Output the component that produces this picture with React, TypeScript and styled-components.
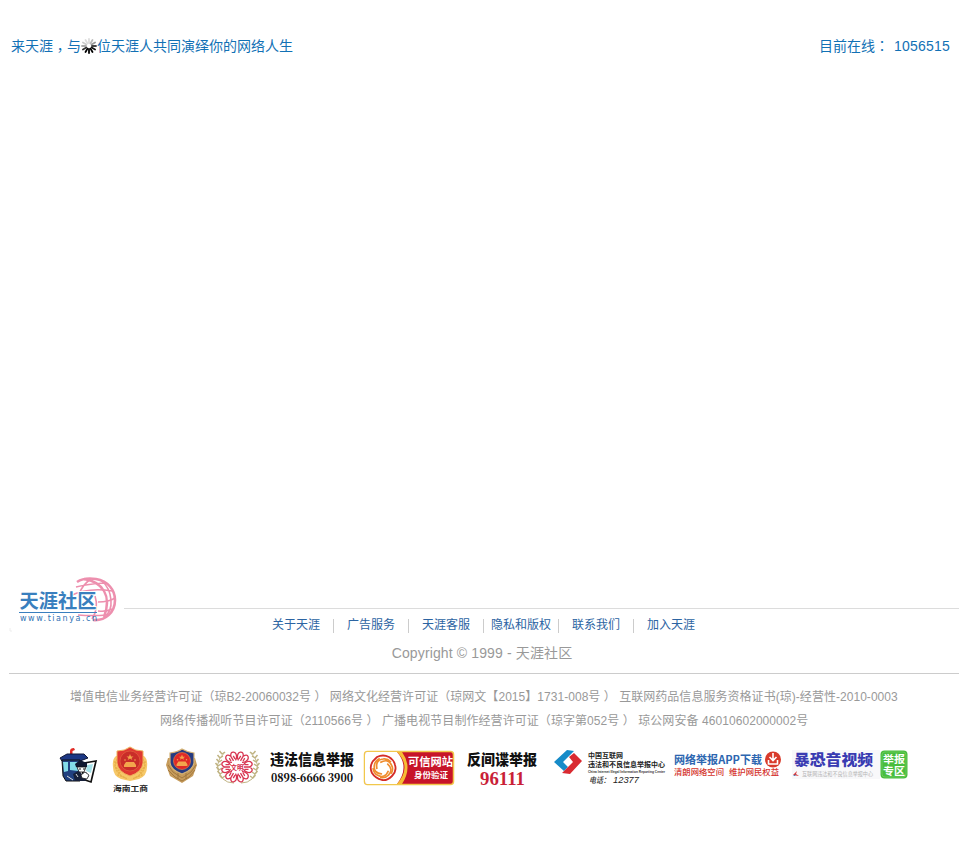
import React from "react";
import styled, { createGlobalStyle } from "styled-components";

const GlobalStyle = createGlobalStyle`
  * { box-sizing: border-box; }
  body { margin: 0; background: #fff; font-family: "Liberation Sans", "Noto Sans CJK SC", sans-serif; }
`;
const Page = styled.div`
  width: 967px; height: 854px; display: flex; flex-direction: column; overflow: hidden;
`;
const TopBar = styled.header`
  display: flex; justify-content: space-between; align-items: center;
  margin-top: 36px; height: 20px; padding: 0 17px 0 11px;
  font-size: 14px; line-height: 20px; color: #1271b5; white-space: nowrap;
`;
const Slogan = styled.div`display: flex; align-items: center;`;
const Online = styled.div`display: flex; gap: 5px;`;
const Count = styled.span`letter-spacing: 0.2px;`;
const CenteredMark = styled.span<{ $drop?: number }>`
  display: inline-block; font-family: "Noto Sans CJK TC", sans-serif; line-height: 1;
  transform: translateY(${p => p.$drop ?? 0}px);
`;
const Footer = styled.footer`margin-top: 514px; display: flex; flex-direction: column;`;
const BrandRow = styled.div`display: flex; height: 39px; padding-right: 8px;`;
const LogoSlot = styled.div`width: 124px; flex: none;`;
const BrandRule = styled.div`flex: 1; border-bottom: 1px solid #dcdcdc;`;
const Links = styled.nav`
  display: flex; height: 32px; padding: 10px 0 0 259px; font-size: 12px; line-height: 13px;
`;
const FooterLink = styled.a`
  width: 75px; height: 14px; text-align: center; color: #2c64a2; white-space: nowrap;
  border-right: 1px solid #ccc;
  &:last-child { border-right: 0; padding-right: 1px; }
`;
const Copyright = styled.div`
  height: 33px; margin: 0 8px 0 9px; padding-right: 4px; border-bottom: 1px solid #ccc;
  text-align: center; font-size: 14px; line-height: 24px; letter-spacing: 0.13px; color: #999;
`;
const Licenses = styled.div`padding-top: 11px;`;
const License = styled.div<{ $left: number; $track: number }>`
  height: 24px; line-height: 24px; padding-left: ${p => p.$left}px; font-size: 12px;
  color: #999; white-space: pre; letter-spacing: ${p => p.$track}px;
`;
const Badges = styled.div`display: flex; height: 60px; margin-top: 7px; padding-left: 50px;`;
const Drawing = styled.svg`display: block; flex: none; overflow: visible;`;

const CJK = '"Noto Sans CJK SC", sans-serif';
type LabelProps = { x: number; y: number; w: number; size: number; fill: string; weight?: number; family?: string; italic?: boolean; outline?: string; spaced?: boolean; children: string };
const Label = ({ x, y, w, size, fill, weight = 400, family = CJK, italic, outline, spaced, children }: LabelProps) => (
  <text x={x} y={y} textLength={w} lengthAdjust={spaced ? "spacing" : "spacingAndGlyphs"} fontSize={size} fontWeight={weight}
    fontFamily={family} fontStyle={italic ? "italic" : "normal"} fill={fill} stroke={outline ?? "none"} strokeWidth={outline ? 2 : 0} paintOrder="stroke">{children}</text>
);

const Spinner = () => (
  <Drawing width="16" height="16" viewBox="0 0 16 16">
    {["#ddd", "#bbb", "#999", "#444", "#111", "#000", "#000", "#000", "#333", "#aaa", "#ccc", "#ddd"].map((shade, i) => (
      <path key={i} d="M8 1V5" stroke={shade} strokeWidth="1.8" strokeLinecap="round" transform={`rotate(${i * 30} 8 8)`} />
    ))}
  </Drawing>
);

const TianyaLogo = () => (
  <Drawing width="124" height="60" viewBox="0 0 124 60">
    <g fill="none" stroke="#ed8fae">
      <path d="M77 12C83 8 90 8 96 9C108 11 115 20 115 30C115 42 106 51 93 50" strokeWidth="2.6" />
      <path d="M84 9Q98 11 104 21T104 47" strokeWidth="2.4" />
      <path d="M76 17Q88 14 104 13M70 26Q88 17 112 21M79 24Q83 14 91 9M95 26Q99 38 92 49M98 32Q109 32 115 28M98 41Q107 42 112 39M78 45Q92 46 107 45M102 11Q110 18 111 30T104 47" strokeWidth="1.6" />
    </g>
    <Label x={19.5} y={38} w={77} size={19} weight={700} fill="#397fbe" outline="#fff">天涯社区</Label>
    <path d="M19 42.5H97" stroke="#397fbe" />
    <Label x={20} y={50.5} w={77} size={8} family='"DejaVu Sans", sans-serif' spaced fill="#2f72b4">www.tianya.cn</Label>
    <path d="M10 58V61H12" fill="none" stroke="#eee" />
  </Drawing>
);

const PoliceBox = () => (
  <Drawing width="55" height="60" viewBox="0 0 55 60">
    <path d="M20 14V11Q20 8 24 8L25 10L22.5 11V14Z" fill="#e12b25" />
    <path d="M10 18L17 14L34 14L38 18L30 21L12 21Z" fill="#1c3784" stroke="#101735" />
    <path d="M12 20L30 20V41L16 41L13 36Z" fill="#214080" stroke="#111" />
    <path d="M13 22H18V31L14 32ZM20 22H28V31L20 30Z" fill="#83dce8" />
    <path d="M34 23L46 21L41 42L32 39Z" fill="#fff" stroke="#111" strokeWidth="1.7" />
    <path d="M37 25L43 24L41 33L36 31Z" fill="#a5e2e9" />
    <path d="M25 24L30 20L37 23L37 27L26 27Z" fill="#101830" />
    <path d="M27 27H36L34 32H29Z" fill="#fff" stroke="#111" strokeWidth=".8" />
    <path d="M29 29H31M33 29H35" stroke="#111" />
    <path d="M23 34L28 31L32 34L36 32L39 36L35 41L25 41Z" fill="#17203a" />
    <path d="M31 35L35 32L39 35L37 39L32 38Z" fill="#fff" stroke="#111" strokeWidth=".7" />
    <path d="M17 36L23 40M26 34L28 37" stroke="#ddd" />
  </Drawing>
);

const Gate = ({ y }: { y: number }) => (
  <g transform={`translate(0 ${y})`} fill="#f3a64c">
    <path d="M-6 3H6V5H-6ZM-4 0H4L6 3H-6ZM0-8L1-5.5H3.5L1.5-4L2.3-2L0-3.5L-2.3-2L-1.5-4L-3.5-5.5H-1Z" />
    <circle cx="-5" cy="-2" r=".8" /><circle cx="5" cy="-2" r=".8" />
  </g>
);

const CommerceEmblem = () => (
  <Drawing width="50" height="60" viewBox="0 0 50 60">
    <path d="M11 16Q7 19 8 27Q8 36 16 39L25 41L34 39Q42 36 42 27Q43 19 39 16Z" fill="#f6c868" />
    <path d="M10 21Q9 34 23 39M40 21Q41 34 27 39M12 19L10 26L15 32L13 35L21 38M38 19L40 26L35 32L37 35L29 38" fill="none" stroke="#e7af48" strokeWidth="1.3" strokeDasharray="2 1" />
    <path d="M12 11Q20 11 25 7Q30 11 38 11V23Q37 32 25 36Q13 32 12 23Z" fill="#df3831" stroke="#efb05b" strokeWidth="1" />
    <circle cx="25" cy="21" r="10" fill="#c92d29" stroke="#e36c43" strokeWidth=".6" />
    <g transform="translate(25 0)"><Gate y={22} /></g>
    <Label x={8} y={51} w={35} size={7} weight={700} fill="#222">海南工商</Label>
  </Drawing>
);
const PoliceEmblem = () => (
  <Drawing width="55" height="60" viewBox="0 0 55 60">
    <path d="M13 18L11 25L15 36L27 43L38 36L42 25L40 18Z" fill="#c69b5b" />
    <path d="M13 25L18 32L27 38L36 32L41 25M13 30L20 37L27 41L34 37L40 30M23 33V39M31 33V39" fill="none" stroke="#987039" strokeWidth=".8" />
    <path d="M15 13Q23 12 27 9Q32 12 39 13V23Q38 30 27 34Q16 30 15 23Z" fill="#263b81" stroke="#d6b477" strokeWidth="1.2" />
    <circle cx="27" cy="21" r="8.5" fill="#df2927" stroke="#ed8d47" strokeWidth=".6" />
    <g transform="translate(27 0) scale(.9)"><Gate y={24} /></g>
  </Drawing>
);
const CivilizedBadge = () => (
  <Drawing width="52" height="60" viewBox="55 0 52 60">
    <g fill="none" stroke="#c0b484" strokeWidth="1">
      <path d="M70 12Q56 25 68 39Q72 43 79 43M95 12Q109 25 97 39Q93 43 86 43" />
      {[14, 18, 22, 26, 30, 34, 38].map((y, i) => {
        const bend = [1, 3, 4, 5, 4, 3, 1][i];
        return <path key={y} d={`M${68 - bend} ${y}l-2.5-3m2.5 3l3-2M${97 + bend} ${y}l2.5-3m-2.5 3l-3-2`} strokeWidth="1.5" />;
      })}
    </g>
    <g fill="none" stroke="#d83551" strokeWidth="1.3">
      {[0, 60, 120, 180, 240, 300].map(a => <path key={a} transform={`rotate(${a + 30} 82 27)`} d="M82 20V14.5Q80 10.5 77.5 12.5Q75 15 78 19L80 20.5M82 14.5Q84 10.5 86.5 12.5Q89 15 86 19L84 20.5M79.7 19V15.5M84.3 19V15.5" />)}
    </g>
    <Label x={75.5} y={29.7} w={13} size={7} weight={700} fill="#d62947">文明</Label>
  </Drawing>
);
const HotlineBadge = () => (
  <Drawing width="96" height="60" viewBox="0 0 96 60">
    <Label x={8} y={25} w={84} size={14.5} weight={900} fill="#111">违法信息举报</Label>
    <Label x={9} y={42} w={82} size={12.5} weight={900} family='"Noto Serif CJK SC", "Liberation Serif", serif' fill="#111">0898-6666 3900</Label>
  </Drawing>
);
const TrustedBadge = () => (
  <Drawing width="97" height="60" viewBox="0 0 97 60">
    <rect x="6.5" y="11.5" width="89" height="33" rx="3" fill="#c71429" stroke="#f1c84c" strokeWidth="1.5" />
    <path d="M9 12H39Q52 27 39 44H9Q7 44 7 41V15Q7 12 9 12Z" fill="#fff" />
    <path d="M39 12Q54 27 39 44H44Q55 27 44 12Z" fill="#f6bd35" />
    <path d="M19 17Q25 14 31 17Q36 20 37 25Q39 31 34 36Q29 41 24 40Q17 38 14 33Q11 27 15 21Z" fill="none" stroke="#d52d28" strokeWidth="1.8" />
    <g fill="none" stroke="#ef8c2e" strokeWidth="1.7">
      {[0, 72, 144, 216, 288].map(a => <path key={a} transform={`rotate(${a} 25 28)`} d="M19 29Q17 20 25 19Q29 18 33 22" />)}
    </g>
    <Label x={50} y={26} w={45} size={11} weight={700} fill="#fff">可信网站</Label>
    <Label x={56} y={37.5} w={34} size={8} weight={700} fill="#fff">身份验证</Label>
  </Drawing>
);
const SpyBadge = () => (
  <Drawing width="95" height="60" viewBox="0 0 95 60">
    <Label x={12} y={25} w={70} size={14.5} weight={900} fill="#111">反间谍举报</Label>
    <Label x={25} y={45} w={45} size={18.5} weight={700} family='"Liberation Serif", serif' fill="#c91f37">96111</Label>
  </Drawing>
);
const InternetCenter = () => (
  <Drawing width="118" height="60" viewBox="0 0 118 60">
    <path d="M4 22L17 10L24 11L13 22L18 27L14 31Z" fill="#168bc8" />
    <path d="M24 13L32 21L20 34L12 33L23 22L19 17Z" fill="#d92a31" />
    <Label x={38} y={18} w={35} size={6.7} weight={700} fill="#222">中国互联网</Label>
    <Label x={38} y={27} w={77} size={7} weight={700} fill="#222">违法和不良信息举报中心</Label>
    <Label x={38} y={32.5} w={77} size={3.5} weight={700} family='"Liberation Sans", sans-serif' fill="#333">China Internet Illegal Information Reporting Center</Label>
    <Label x={39} y={43} w={21} size={8} italic weight={500} fill="#333">电话：</Label>
    <Label x={63} y={43} w={26} size={9} italic family='"Liberation Sans", sans-serif' fill="#222">12377</Label>
  </Drawing>
);
const AppBadge = () => (
  <Drawing width="117" height="60" viewBox="0 0 117 60">
    <Label x={6} y={24} w={88} size={11.5} weight={700} fill="#2d66b0">网络举报APP下载</Label>
    <circle cx="105" cy="19.5" r="8" fill="#d93b2b" />
    <path d="M105 13V20M101.5 17L105 20.5L108.5 17M100.5 20V24H109.5V20" fill="none" stroke="#fff" strokeWidth="1.6" />
    <Label x={6} y={35} w={50} size={7.7} weight={500} fill="#d4332d">清朗网络空间</Label>
    <Label x={61} y={35} w={50} size={7.7} weight={500} fill="#d4332d">维护网民权益</Label>
  </Drawing>
);
const VideoBadge = () => (
  <Drawing width="130" height="60" viewBox="0 0 130 60">
    <rect x="7" y="10" width="88" height="29" fill="#f8f8fa" />
    <Label x={9} y={25} w={79} size={14.5} weight={900} fill="#393bb2">暴恐音视频</Label>
    <path d="M8 35L12 31L11 34L14 36Z" fill="#d33" /><path d="M8 36L11 34L10 36Z" fill="#357cc0" />
    <Label x={17} y={35.5} w={71} size={5.5} fill="#b5b5b5">互联网违法和不良信息举报中心</Label>
    <rect x="95.5" y="10.5" width="27" height="28" rx="4" fill="#48bd3d" />
    <rect x="97" y="12" width="24" height="25" rx="3" fill="none" stroke="#7bd36b" strokeWidth=".6" />
    <Label x={98} y={23} w={22} size={10} weight={700} fill="#fff">举报</Label>
    <Label x={98} y={34.5} w={22} size={10} weight={700} fill="#fff">专区</Label>
  </Drawing>
);

export default function App() {
  return (
    <><GlobalStyle /><Page>
      <TopBar>
        <Slogan><span>来天涯<CenteredMark $drop={4}>，</CenteredMark>与</span><Spinner /><span>位天涯人共同演绎你的网络人生</span></Slogan>
        <Online><span>目前在线<CenteredMark>：</CenteredMark></span><Count>1056515</Count></Online>
      </TopBar>
      <Footer>
        <BrandRow><LogoSlot><TianyaLogo /></LogoSlot><BrandRule /></BrandRow>
        <Links>
          {["关于天涯", "广告服务", "天涯客服", "隐私和版权", "联系我们", "加入天涯"].map(t => <FooterLink key={t}>{t}</FooterLink>)}
        </Links>
        <Copyright>Copyright © 1999 - 天涯社区</Copyright>
        <Licenses>
          <License $left={70} $track={0.04}>增值电信业务经营许可证（琼B2-20060032号 ） 网络文化经营许可证（琼网文【2015】1731-008号 ） 互联网药品信息服务资格证书(琼)-经营性-2010-0003</License>
          <License $left={160} $track={0.065}>网络传播视听节目许可证（2110566号 ） 广播电视节目制作经营许可证（琼字第052号 ） 琼公网安备 46010602000002号</License>
        </Licenses>
        <Badges>
          <PoliceBox /><CommerceEmblem /><PoliceEmblem /><CivilizedBadge /><HotlineBadge />
          <TrustedBadge /><SpyBadge /><InternetCenter /><AppBadge /><VideoBadge />
        </Badges>
      </Footer>
    </Page></>
  );
}
